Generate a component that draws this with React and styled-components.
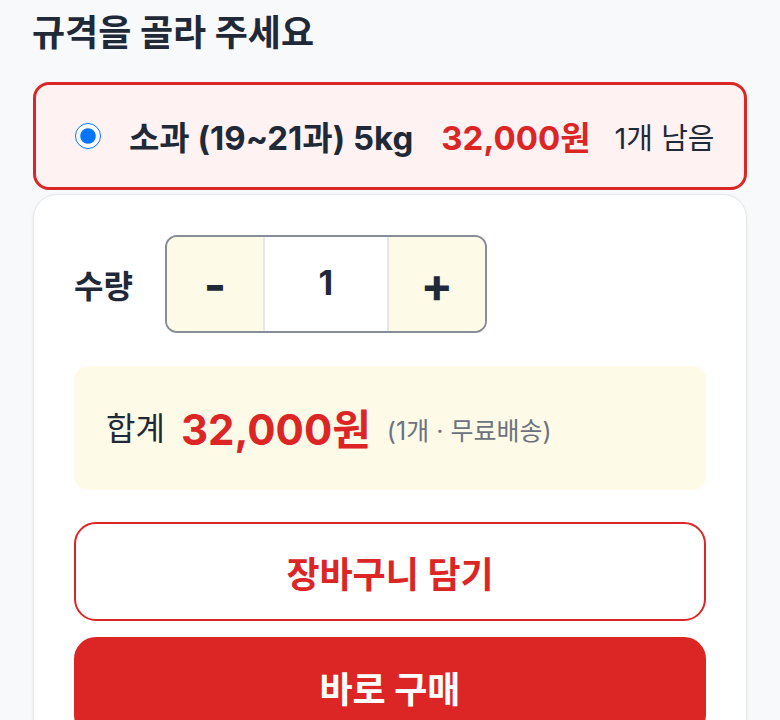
import React, { useState } from "react";
import styled, { createGlobalStyle } from "styled-components";

const Global = createGlobalStyle`
  html, body { margin: 0; padding: 0; background: #f8f9fb; }
  body { font-family: Inter, "Noto Sans CJK KR", sans-serif; color: #1f2937; }
  * { box-sizing: border-box; }
`;

const Page = styled.div`
  padding: 8px 33px 0 33px;
  display: flex;
  flex-direction: column;
`;

const Title = styled.h2`
  margin: 0 0 24px -1px;
  font-size: 36px;
  font-weight: 700;
  line-height: 50px;
  color: #1f2937;
`;

const Option = styled.label`
  display: flex;
  align-items: center;
  gap: 28px;
  height: 108px;
  padding: 0 24px 0 39px;
  border: 3px solid #dc2626;
  border-radius: 16px;
  background: #fef2f2;
  white-space: nowrap;
  cursor: pointer;
`;

const Radio = styled.input`
  width: 26px;
  height: 26px;
  margin: 0;
  flex: none;
`;

const Name = styled.span`
  flex: none;
  font-size: 33px;
  font-weight: 700;
  color: #1f2937;
`;

const Price = styled.span`
  flex: none;
  font-size: 33px;
  font-weight: 700;
  color: #dc2626;
`;

const Stock = styled.span`
  flex: none;
  font-size: 29px;
  color: #1f2937;
  margin-left: -4px;
`;

const Card = styled.div`
  margin-top: 4px;
  background: #fff;
  border: 1.5px solid #e5e7eb;
  border-radius: 24px;
  padding: 40px 40px 40px;
  display: flex;
  flex-direction: column;
  box-shadow: 0 1px 4px rgba(0,0,0,0.05);
`;

const QtyRow = styled.div`
  display: flex;
  align-items: center;
  gap: 32px;
`;

const QtyLabel = styled.span`
  font-size: 32px;
  font-weight: 700;
`;

const Stepper = styled.div`
  display: flex;
  height: 98px;
  border: 2px solid #878e98;
  border-radius: 12px;
  overflow: hidden;
`;

const StepBtn = styled.button`
  width: 96px;
  border: none;
  background: #fefae8;
  font-family: inherit;
  font-size: 48px;
  font-weight: 700;
  color: #1f2937;
  padding: 0;
  cursor: pointer;
`;

const QtyValue = styled.div`
  width: 126px;
  display: flex;
  align-items: center;
  justify-content: center;
  border-left: 2px solid #e5e7eb;
  border-right: 2px solid #e5e7eb;
  background: #fff;
  font-size: 34px;
  font-weight: 700;
  padding-bottom: 4px;
`;

const Summary = styled.div`
  margin-top: 33px;
  height: 124px;
  border-radius: 14px;
  background: #fefae8;
  display: flex;
  align-items: center;
  gap: 16px;
  padding: 0 32px 4px;
  white-space: nowrap;
`;

const SumLabel = styled.span`
  font-size: 32px;
  color: #1f2937;
`;

const SumPrice = styled.span`
  font-size: 42px;
  font-weight: 700;
  color: #dc2626;
`;

const SumNote = styled.span`
  font-size: 25px;
  color: #6b7280;
  padding-top: 6px;
`;

const Button = styled.button`
  height: ${(p) => (p.$primary ? "100px" : "99px")};
  margin-top: ${(p) => (p.$primary ? "16px" : "32px")};
  border-radius: 22px;
  border: 2px solid #dc2626;
  background: ${(p) => (p.$primary ? "#dc2626" : "#fff")};
  color: ${(p) => (p.$primary ? "#fff" : "#dc2626")};
  font-family: inherit;
  font-size: 36px;
  font-weight: 700;
  cursor: pointer;
`;

export default function App() {
  const [qty, setQty] = useState(1);
  return (
    <>
      <Global />
      <Page>
        <Title>규격을 골라 주세요</Title>
        <Option>
          <Radio type="radio" name="spec" defaultChecked />
          <Name>소과 (19~21과) 5kg</Name>
          <Price>32,000원</Price>
          <Stock>1개 남음</Stock>
        </Option>
        <Card>
          <QtyRow>
            <QtyLabel>수량</QtyLabel>
            <Stepper>
              <StepBtn onClick={() => setQty((q) => Math.max(1, q - 1))}>-</StepBtn>
              <QtyValue>{qty}</QtyValue>
              <StepBtn onClick={() => setQty((q) => Math.min(1, q + 1))}>+</StepBtn>
            </Stepper>
          </QtyRow>
          <Summary>
            <SumLabel>합계</SumLabel>
            <SumPrice>32,000원</SumPrice>
            <SumNote>(1개 · 무료배송)</SumNote>
          </Summary>
          <Button>장바구니 담기</Button>
          <Button $primary>바로 구매</Button>
        </Card>
      </Page>
    </>
  );
}
